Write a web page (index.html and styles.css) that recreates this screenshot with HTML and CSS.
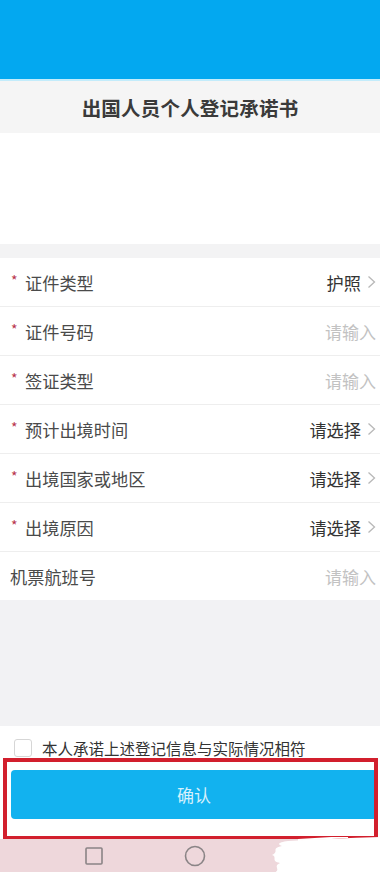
FILE: index.html
```html
<!DOCTYPE html>
<html lang="zh">
<head>
<meta charset="utf-8">
<link rel="stylesheet" href="styles.css">
</head>
<body>
<div class="screen">
  <div class="topbar"></div>
  <div class="titlebar">出国人员个人登记承诺书</div>
  <div class="blank"></div>
  <div class="gap"></div>
  <div class="form">
    <div class="row"><span class="label"><i class="req">*</i>证件类型</span><span class="value">护照<svg class="chev" width="9" height="14" viewBox="0 0 9 14"><path d="M1.5 1.5 L7.5 7 L1.5 12.5" fill="none" stroke="#b8b8b8" stroke-width="1.3"/></svg></span></div>
    <div class="row"><span class="label"><i class="req">*</i>证件号码</span><span class="ph">请输入</span></div>
    <div class="row"><span class="label"><i class="req">*</i>签证类型</span><span class="ph">请输入</span></div>
    <div class="row"><span class="label"><i class="req">*</i>预计出境时间</span><span class="value">请选择<svg class="chev" width="9" height="14" viewBox="0 0 9 14"><path d="M1.5 1.5 L7.5 7 L1.5 12.5" fill="none" stroke="#b8b8b8" stroke-width="1.3"/></svg></span></div>
    <div class="row"><span class="label"><i class="req">*</i>出境国家或地区</span><span class="value">请选择<svg class="chev" width="9" height="14" viewBox="0 0 9 14"><path d="M1.5 1.5 L7.5 7 L1.5 12.5" fill="none" stroke="#b8b8b8" stroke-width="1.3"/></svg></span></div>
    <div class="row"><span class="label"><i class="req">*</i>出境原因</span><span class="value">请选择<svg class="chev" width="9" height="14" viewBox="0 0 9 14"><path d="M1.5 1.5 L7.5 7 L1.5 12.5" fill="none" stroke="#b8b8b8" stroke-width="1.3"/></svg></span></div>
    <div class="row last"><span class="label plain">机票航班号</span><span class="ph">请输入</span></div>
  </div>
  <div class="filler"></div>
  <div class="footer">
    <label class="agree"><span class="box"></span><span>本人承诺上述登记信息与实际情况相符</span></label>
    <div class="btn">确认</div>
    <div class="redmark"></div>
  </div>
  <div class="navbar">
    <svg class="navicon" width="18" height="18" viewBox="0 0 18 18"><rect x="1" y="1" width="16" height="16" rx="1" fill="none" stroke="#8a8486" stroke-width="1.6"/></svg>
    <svg class="navicon" width="22" height="22" viewBox="0 0 22 22"><circle cx="11" cy="11" r="9.5" fill="none" stroke="#8a8486" stroke-width="1.6"/></svg>
    <svg class="scribble" width="112" height="36" viewBox="0 0 112 36"><path d="M20 4 C50 2 80 1 112 0 L112 36 L6 36 C14 32 4 30 12 26 C2 24 10 20 4 18 C12 14 2 12 14 9 C8 7 12 5 20 4 Z" fill="#ffffff"/><path d="M30 3 L80 0" stroke="#ffffff" stroke-width="2"/></svg>
  </div>
</div>
</body>
</html>
```
FILE: styles.css
```css
* { box-sizing: border-box; margin: 0; padding: 0; }
html, body { width: 380px; height: 872px; overflow: hidden; background: #fff; }
body { font-family: "Noto Sans CJK SC", "Noto Sans", sans-serif; color: #333; }
.screen { display: flex; flex-direction: column; width: 380px; height: 872px; position: relative; }
.topbar { height: 81px; background: #03a8f0; border-bottom: 2px solid #c3ecfb; flex: none; }
.titlebar { height: 52px; background: #f5f5f5; display: flex; align-items: center; justify-content: center; font-size: 19.5px; font-weight: 700; color: #3a3a3a; letter-spacing: 0.2px; flex: none; }
.blank { height: 111px; background: #fff; flex: none; }
.gap { height: 14px; background: #f3f3f4; flex: none; }
.form { background: #fff; flex: none; }
.row { height: 49px; display: flex; align-items: center; justify-content: space-between; padding: 0 4px 0 11px; border-bottom: 1px solid #eeeeee; font-size: 17.2px; }
.row.last { border-bottom: none; height: 48px; }
.label { color: #4a4a4a; display: flex; align-items: center; }
.label.plain { margin-left: -1px; }
.req { font-style: normal; color: #b8344c; font-size: 14px; width: 14px; margin-top: -4px; }
.value { color: #333; display: flex; align-items: center; }
.chev { margin-left: 6px; flex: none; }
.ph { color: #c2c2c2; font-size: 17px; }
.filler { height: 126px; background: #f2f2f4; flex: none; }
.footer { position: relative; height: 113px; background: #fff; display: flex; flex-direction: column; flex: none; }
.agree { display: flex; align-items: center; gap: 10px; padding: 0 0 0 14px; height: 44px; font-size: 15.5px; color: #333; }
.box { width: 18px; height: 18px; border: 1.5px solid #d6d6d6; border-radius: 3px; background: #fff; flex: none; }
.btn { margin: 0 3px 0 11px; height: 49px; background: #12b2ef; border-radius: 4px; display: flex; align-items: center; justify-content: center; color: #d6f0fc; font-size: 17px; }
.redmark { position: absolute; left: 3px; top: 32px; width: 375px; height: 82px; border: 4px solid #d21f2d; pointer-events: none; }
.navbar { flex: 1; background: #eed7db; display: flex; align-items: center; padding-left: 85px; gap: 81px; position: relative; }
.navicon { flex: none; }
.scribble { position: absolute; right: 0; top: -2px; }
```
